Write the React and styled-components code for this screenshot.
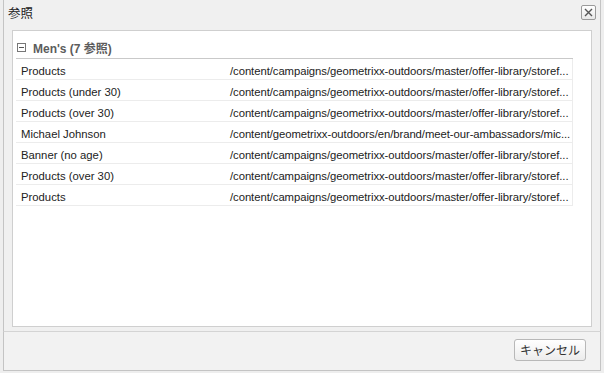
import React from "react";
import styled, { createGlobalStyle } from "styled-components";

const GlobalStyle = createGlobalStyle`
  html, body {
    margin: 0;
    padding: 0;
    background: #ffffff;
  }
  body {
    font-family: "Liberation Sans", "Noto Sans CJK JP", sans-serif;
  }
`;

// paths are shown already cut, as the grid renders them
const storefront = "/content/campaigns/geometrixx-outdoors/master/offer-library/storef...";

const references = [
  { name: "Products", path: storefront },
  { name: "Products (under 30)", path: storefront },
  { name: "Products (over 30)", path: storefront },
  { name: "Michael Johnson", path: "/content/geometrixx-outdoors/en/brand/meet-our-ambassadors/mic..." },
  { name: "Banner (no age)", path: storefront },
  { name: "Products (over 30)", path: storefront },
  { name: "Products", path: storefront }
];

const ReferencesDialog = () => {
  return (
    <Window>
      <TitleBar>
        <Title>参照</Title>
        <CloseButton aria-label="close">
          <svg width="9" height="9" viewBox="0 0 9 9">
            <path d="M1 1 L8 8 M8 1 L1 8" stroke="#555" strokeWidth="1.4" fill="none" />
          </svg>
        </CloseButton>
      </TitleBar>

      <Body>
        <Panel>
          <Group>
            <GroupHeader>
              <Toggle>
                <svg width="9" height="9" viewBox="0 0 9 9">
                  <rect x="0.5" y="0.5" width="8" height="8" fill="#fff" stroke="#777" />
                  <path d="M2 4.5 H7" stroke="#555" strokeWidth="1" />
                </svg>
              </Toggle>
              Men's (7 参照)
            </GroupHeader>
            <Rows>
              {references.map((ref, i) => (
                <Row key={i}>
                  <NameCell>{ref.name}</NameCell>
                  <PathCell>{ref.path}</PathCell>
                </Row>
              ))}
            </Rows>
          </Group>
        </Panel>
      </Body>

      <Footer>
        <Button>キャンセル</Button>
      </Footer>
    </Window>
  );
};

const Window = styled.div`
  box-sizing: border-box;
  width: 604px;
  height: 373px;
  padding: 0 3px 2px 3px;
  background: #eeeeee;
  display: flex;
  flex-direction: column;

  & > * {
    border-left: 1px solid #c4c4c4;
    border-right: 1px solid #c4c4c4;
  }
`;

const TitleBar = styled.div`
  height: 26px;
  box-sizing: border-box;
  display: flex;
  align-items: center;
  justify-content: space-between;
  padding: 0 4px 2px 4px;
  background: #f0f0f0;
`;

const Title = styled.span`
  font-size: 12.5px;
  color: #222;
`;

const CloseButton = styled.div`
  width: 15px;
  height: 15px;
  box-sizing: border-box;
  border: 1px solid #9a9a9a;
  border-radius: 2px;
  background: linear-gradient(#ffffff, #e8e8e8);
  display: flex;
  align-items: center;
  justify-content: center;
`;

const Body = styled.div`
  box-sizing: border-box;
  flex: 0 0 306px;
  padding: 4px 8px 4px 8px;
  background: #f0f0f0;
  border-bottom: 1px solid #d4d4d4;
  display: flex;
`;

const Panel = styled.div`
  flex: 1;
  box-sizing: border-box;
  background: #ffffff;
  border: 1px solid #cfcfcf;
  padding: 10px 18px 0 3px;
`;

const Group = styled.div`
  display: flex;
  flex-direction: column;
`;

const GroupHeader = styled.div`
  height: 18px;
  box-sizing: border-box;
  padding: 0 0 4px 1px;
  display: flex;
  align-items: center;
  gap: 6px;
  font-size: 12px;
  font-weight: bold;
  color: #5c5c5c;
  border-bottom: 1px solid #c9c9c9;
`;

const Toggle = styled.span`
  display: flex;
  width: 9px;
  height: 9px;
  margin-right: 1px;
`;

const Rows = styled.div`
  display: flex;
  flex-direction: column;
`;

const Row = styled.div`
  display: grid;
  grid-template-columns: 210px 1fr;
  height: 21px;
  box-sizing: border-box;
  padding-top: 3px;
  align-items: center;
  border-bottom: 1px solid #ececec;
  border-right: 1px solid #ececec;
  font-size: 11.3px;
  color: #222;
`;

const NameCell = styled.div`
  padding-left: 5px;
  white-space: nowrap;
  overflow: hidden;
`;

const PathCell = styled.div`
  padding: 0 1px 0 4px;
  white-space: nowrap;
  overflow: hidden;
  letter-spacing: -0.06px;
`;

const Footer = styled.div`
  flex: 1;
  display: flex;
  align-items: center;
  justify-content: flex-end;
  padding: 0 14px 3px 0;
  background: #f2f2f2;
  border-bottom: 1px solid #c4c4c4;
`;

const Button = styled.div`
  width: 72px;
  height: 22px;
  box-sizing: border-box;
  display: flex;
  align-items: center;
  justify-content: center;
  border: 1px solid #b8b8b8;
  border-radius: 3px;
  background: linear-gradient(#ffffff, #ececec);
  font-size: 12px;
  color: #333;
`;

const App = () => (
  <>
    <GlobalStyle />
    <ReferencesDialog />
  </>
);

export default App;
